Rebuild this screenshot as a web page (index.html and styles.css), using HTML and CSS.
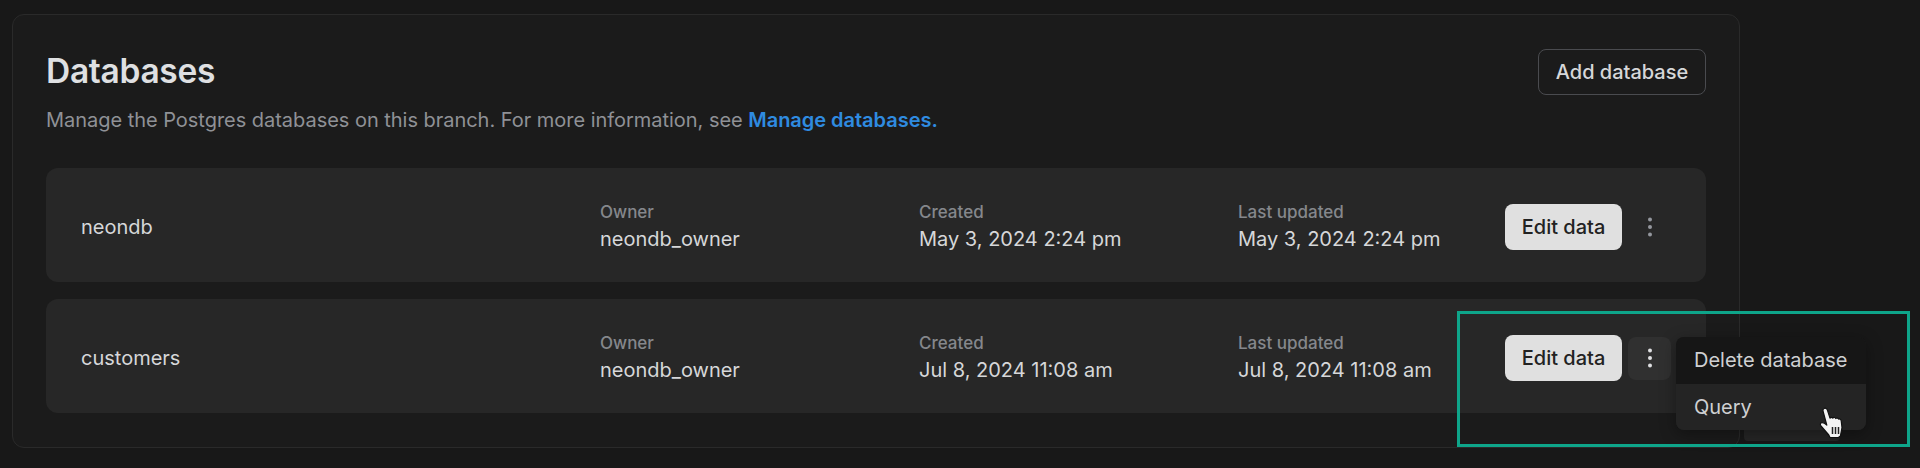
FILE: index.html
```html
<!DOCTYPE html>
<html lang="en">
<head>
<meta charset="utf-8">
<title>Databases</title>
<link rel="stylesheet" href="styles.css">
</head>
<body>
<section class="panel">
  <header class="panel-head">
    <div>
      <h1>Databases</h1>
      <p class="lead">Manage the Postgres databases on this branch. For more information, see <a href="#">Manage databases.</a></p>
    </div>
    <button class="btn-outline">Add database</button>
  </header>
  <div class="rows">
    <div class="row">
      <div class="name">neondb</div>
      <div class="meta owner"><span>Owner</span><strong>neondb_owner</strong></div>
      <div class="meta created"><span>Created</span><strong>May 3, 2024 2:24 pm</strong></div>
      <div class="meta updated"><span>Last updated</span><strong>May 3, 2024 2:24 pm</strong></div>
      <div class="actions">
        <button class="btn-edit">Edit data</button>
        <button class="kebab"><svg width="4" height="20" viewBox="0 0 4 20"><circle cx="2" cy="2.5" r="2"/><circle cx="2" cy="10" r="2"/><circle cx="2" cy="17.500" r="2"/></svg></button>
      </div>
    </div>
    <div class="row">
      <div class="name">customers</div>
      <div class="meta owner"><span>Owner</span><strong>neondb_owner</strong></div>
      <div class="meta created"><span>Created</span><strong>Jul 8, 2024 11:08 am</strong></div>
      <div class="meta updated"><span>Last updated</span><strong>Jul 8, 2024 11:08 am</strong></div>
      <div class="actions">
        <button class="btn-edit">Edit data</button>
        <button class="kebab open"><svg width="4" height="20" viewBox="0 0 4 20"><circle cx="2" cy="2.5" r="2"/><circle cx="2" cy="10" r="2"/><circle cx="2" cy="17.500" r="2"/></svg></button>
      </div>
    </div>
  </div>
</section>
<div class="under-tab"></div>
<div class="menu">
  <div class="item active">Delete database</div>
  <div class="item">Query</div>
</div>
<div class="highlight"></div>
<svg class="cursor" width="28" height="32" viewBox="0 0 28 32">
  <path d="M5 1.500c1.500-.8 3 .2 3.400 1.600l2.600 8c.6-1 2.200-1 2.800 0 .8-1 2.400-.8 3 .4.800-.8 2.400-.6 2.800.6.900-.4 2.300.2 2.600 1.500l.8 7-1.600 8.500-2 1.400H11l-1.200-2.500L2 19c-1.200-1.500-.6-3.200.8-3.400 1.600-.2 3.400 1 5 2.500L4 4c-.2-1.100 0-2 1-2.500z" fill="#f4f4f4" stroke="#111" stroke-width="1.200" stroke-linejoin="round"/>
  <path d="M13.500 20v7M16.500 20v7M19.500 20v7" stroke="#222" stroke-width="1.500"/>
</svg>
</body>
</html>
```
FILE: styles.css
```css
* { box-sizing: border-box; }
html, body { margin: 0; height: 468px; overflow: hidden; }
body {
  background: #181818;
  font-family: Inter, "Liberation Sans", sans-serif;
  color: #e4e5e7;
  padding: 14px 0 0 12px;
  position: relative;
}
.panel {
  width: 1728px;
  height: 434px;
  background: #1b1b1b;
  border: 1px solid #2a2a2a;
  border-radius: 12px;
  padding: 33px 33px 0;
}
.panel-head { display: flex; justify-content: space-between; align-items: flex-start; height: 86px; }
h1 {
  margin: 4px 0 0;
  font-size: 33.500px;
  line-height: 38px;
  font-weight: 600;
  letter-spacing: -0.3px;
  color: #dfe0e2;
}
.lead {
  margin: 17px 0 0;
  font-size: 20px;
  line-height: 26px;
  letter-spacing: -0.03px;
  color: #8f9196;
}
.lead a { color: #2f8be0; font-weight: 600; text-decoration: none; }
.btn-outline {
  margin-top: 1px;
  width: 168px;
  height: 46px;
  background: transparent;
  border: 1px solid #4a4b4f;
  border-radius: 8px;
  color: #d6d7d9;
  font: 500 20px Inter, sans-serif;
}
.rows { display: flex; flex-direction: column; gap: 17px; margin-top: 34px; }
.row {
  position: relative;
  display: grid;
  grid-template-columns: 519px 319px 319px 267px 1fr;
  align-items: center;
  height: 114px;
  padding: 4px 0 0 35px;
  background: #272727;
  border-radius: 12px;
}
.name { font-size: 20px; color: #d6d7d9; }
.meta { display: flex; flex-direction: column; gap: 3px; margin-top: -2px; }
.meta span { font-size: 17px; line-height: 22px; font-weight: 500; color: #85878c; }
.meta strong { font-size: 20px; line-height: 26px; font-weight: 400; color: #d6d7d9; }
.actions { display: flex; align-items: center; gap: 6px; }
.btn-edit {
  width: 117px;
  height: 46px;
  border: 0;
  border-radius: 8px;
  background: #e0e0e0;
  color: #222;
  font: 500 20px Inter, sans-serif;
  padding: 0;
}
.kebab {
  width: 43px;
  height: 43px;
  border: 0;
  border-radius: 8px;
  background: transparent;
  display: flex;
  align-items: center;
  justify-content: center;
  padding: 0;
}
.kebab svg { fill: #94979e; }
.kebab.open { background: #303030; }
.kebab.open svg { fill: #dfe0e2; }
.under-tab {
  position: absolute;
  left: 1744px;
  top: 420px;
  width: 96px;
  height: 21px;
  background: #262626;
  border-radius: 0 0 4px 4px;
}
.menu {
  position: absolute;
  left: 1676px;
  top: 337px;
  width: 190px;
  height: 93px;
  background: #1f1f1f;
  border-radius: 8px;
  overflow: hidden;
  box-shadow: 0 4px 16px rgba(0,0,0,.35);
}
.item {
  height: 46.500px;
  padding: 0 18px;
  display: flex;
  align-items: center;
  font-size: 20px;
  color: #cfd0d2;
  background: #242424;
}
.item.active { background: #161616; }
.highlight {
  position: absolute;
  left: 1457px;
  top: 311px;
  width: 453px;
  height: 136px;
  border: 3px solid #0ea58a;
}
.cursor { position: absolute; left: 1819px; top: 407px; }
```
